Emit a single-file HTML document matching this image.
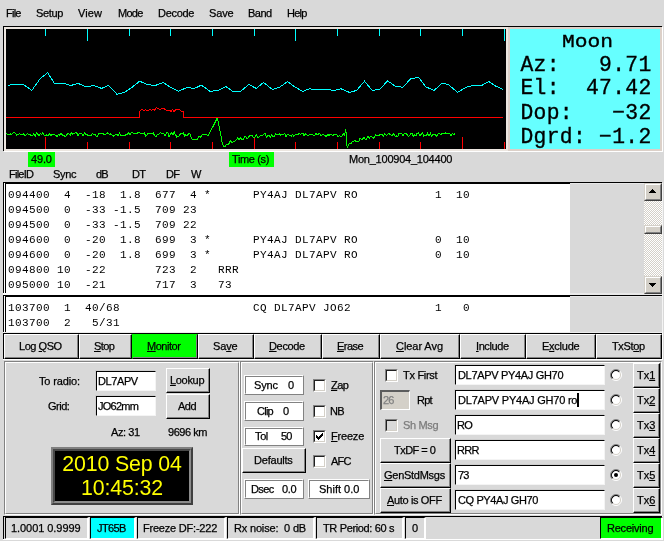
<!DOCTYPE html>
<html><head><meta charset="utf-8"><title>WSJT</title><style>
html,body{margin:0;padding:0;}
body{width:664px;height:541px;background:#d9d9d9;overflow:hidden;position:relative;font-family:"Liberation Sans",sans-serif;font-size:11px;color:#000;}
.a{position:absolute;box-sizing:border-box;}
.t{position:absolute;will-change:transform;-webkit-text-stroke:0.25px currentColor;white-space:pre;line-height:13px;height:13px;}
.m{position:absolute;will-change:transform;white-space:pre;font-family:"Liberation Mono",monospace;font-size:11px;letter-spacing:0.4px;line-height:15px;height:15px;}
.btn{position:absolute;box-sizing:border-box;background:#d9d9d9;border-top:1px solid #fff;border-left:1px solid #fff;border-right:1px solid #000;border-bottom:1px solid #000;}
.btn:after{content:"";position:absolute;left:0;top:0;right:0;bottom:0;border-right:1px solid #828282;border-bottom:1px solid #828282;}
.ent{position:absolute;box-sizing:border-box;background:#fff;border-top:1px solid #000;border-left:1px solid #000;border-right:1px solid #f4f4f4;border-bottom:1px solid #f4f4f4;box-shadow:-1px -1px 0 #cdcdcd;}
.rdg{position:absolute;box-sizing:border-box;background:#fff;border-top:1px solid #fff;border-left:1px solid #fff;border-right:1px solid #828282;border-bottom:1px solid #828282;}
.rdg:after{content:"";position:absolute;left:0;top:0;right:0;bottom:0;border-top:1px solid #828282;border-left:1px solid #828282;border-right:1px solid #fff;border-bottom:1px solid #fff;}
.grv{position:absolute;box-sizing:border-box;border-top:1px solid #828282;border-left:1px solid #828282;border-right:1px solid #fff;border-bottom:1px solid #fff;}
.grv:after{content:"";position:absolute;left:0;top:0;right:0;bottom:0;border-top:1px solid #fff;border-left:1px solid #fff;border-right:1px solid #828282;border-bottom:1px solid #828282;}
.sk{position:absolute;box-sizing:border-box;border-top:1px solid #000;border-left:1px solid #000;border-right:1px solid #fff;border-bottom:1px solid #fff;}
.chk{position:absolute;box-sizing:border-box;width:13px;height:13px;background:#fff;border-top:1px solid #828282;border-left:1px solid #828282;border-right:1px solid #fff;border-bottom:1px solid #fff;}
.chk:after{content:"";position:absolute;left:0;top:0;right:0;bottom:0;border-top:1px solid #202020;border-left:1px solid #202020;border-right:1px solid #d4d0c8;border-bottom:1px solid #d4d0c8;}
u{text-decoration:underline;}
</style></head><body>
<div class="t" style="left:5.62px;top:7px;letter-spacing:-0.750px;">File</div>
<div class="t" style="left:35.50px;top:7px;letter-spacing:-0.367px;">Setup</div>
<div class="t" style="left:78.25px;top:7px;letter-spacing:0.078px;">View</div>
<div class="t" style="left:117.50px;top:7px;letter-spacing:-0.750px;">Mode</div>
<div class="t" style="left:157.50px;top:7px;letter-spacing:-0.297px;">Decode</div>
<div class="t" style="left:208.50px;top:7px;letter-spacing:-0.161px;">Save</div>
<div class="t" style="left:247.75px;top:7px;letter-spacing:-0.495px;">Band</div>
<div class="t" style="left:286.62px;top:7px;letter-spacing:-0.750px;">Help</div>
<div class="a" style="left:3px;top:26px;width:659px;height:1px;background:#000;"></div>
<div class="a" style="left:3px;top:26px;width:1px;height:125px;background:#000;"></div>
<div class="a" style="left:4px;top:27px;width:504px;height:124px;background:#ece6e0;"></div>
<div class="a" style="left:508px;top:27px;width:154px;height:124px;background:#dcd0c8;"></div>
<div class="a" style="left:4px;top:151px;width:658px;height:1px;background:#fff;"></div>
<div class="a" style="left:6px;top:29px;width:500px;height:120px;background:#000;"></div>
<div class="a" style="left:510px;top:29px;width:150px;height:120px;background:#66ffff;"></div>
<div class="a" style="left:662px;top:27px;width:1px;height:125px;background:#fff;"></div>
<svg class="a" style="left:0;top:0" width="664" height="541" shape-rendering="crispEdges">
<rect x="45" y="29" width="1" height="7" fill="#00ffff"/>
<rect x="45" y="137" width="1" height="12" fill="#ff0000"/>
<rect x="87" y="29" width="1" height="12" fill="#00ffff"/>
<rect x="87" y="142" width="1" height="7" fill="#ff0000"/>
<rect x="129" y="29" width="1" height="7" fill="#00ffff"/>
<rect x="129" y="142" width="1" height="7" fill="#ff0000"/>
<rect x="170" y="29" width="1" height="7" fill="#00ffff"/>
<rect x="170" y="142" width="1" height="7" fill="#ff0000"/>
<rect x="212" y="29" width="1" height="7" fill="#00ffff"/>
<rect x="212" y="142" width="1" height="7" fill="#ff0000"/>
<rect x="254" y="29" width="1" height="7" fill="#00ffff"/>
<rect x="254" y="137" width="1" height="12" fill="#ff0000"/>
<rect x="295" y="29" width="1" height="12" fill="#00ffff"/>
<rect x="295" y="142" width="1" height="7" fill="#ff0000"/>
<rect x="337" y="29" width="1" height="7" fill="#00ffff"/>
<rect x="337" y="142" width="1" height="7" fill="#ff0000"/>
<rect x="379" y="29" width="1" height="7" fill="#00ffff"/>
<rect x="379" y="142" width="1" height="7" fill="#ff0000"/>
<rect x="420" y="29" width="1" height="7" fill="#00ffff"/>
<rect x="420" y="142" width="1" height="7" fill="#ff0000"/>
<rect x="462" y="29" width="1" height="7" fill="#00ffff"/>
<rect x="462" y="137" width="1" height="12" fill="#ff0000"/>
<rect x="504" y="29" width="1" height="12" fill="#00ffff"/>
<rect x="504" y="142" width="1" height="7" fill="#ff0000"/>
<polyline fill="none" stroke="#00ffff" stroke-width="1" points="8.2,85.5 12.7,84.5 23.5,84.5 31.8,90.4 40.2,78.6 47.6,72.7 54.5,83.5 64.7,83.5 70.6,85.5 78.4,83.5 86.3,87 93.7,85.5 101.6,88.4 108.4,85.5 117,94.3 124.5,92.4 131.8,87.5 139.6,81.2 147.5,84.5 155.3,85.5 163.1,82.5 171,87.5 178.4,91.4 186.7,87.5 194.5,88.4 201.4,85.1 210.2,91.4 218,90.4 225.9,86.5 232.7,91.4 240.6,91.4 248.8,84.5 256.3,88.4 263.5,82.5 272.4,89.4 279.2,87.5 287.6,81.6 294.9,87 302.7,91.4 309.6,88.8 314.5,89.4 329.2,89.8 334.1,90.4 341,88.8 349.4,92.4 356.7,90.4 364.5,81.2 372.4,90.5 380.3,88.9 387.6,80.8 396.1,86.7 402.9,87.1 410.8,78.7 418.7,77.4 425.5,86.7 434.1,90.5 441.8,83.3 448.1,84.4 457.6,92.3 466.2,87.1 472.9,85.5 480.8,86 488.8,81.5 495.5,86 502.8,89.4"/>
<polyline fill="none" stroke="#ff0000" stroke-width="1" points="6,117.5 139.5,117.5 140,111 141,110.077 142.5,109.662 144,110.862 145.5,109.474 147,110.586 148.5,110.178 150,109.439 151.5,110.518 153,109.39 154.5,110.341 156,107.968 157.5,108.018 159,108.819 160.5,109.784 162,108.097 163.5,108.336 165,109.306 166.5,110.075 168,110.685 169.5,110.252 171,111.643 172.5,109.412 174,111.36 175.5,109.995 177,109.646 178.5,109.583 180,110.04 181.5,111.259 183,111 183.5,117.5 503,117.5"/>
<polyline fill="none" stroke="#00ff00" stroke-width="1" points="6.5,133.3 7.8,134.8 9.1,135.0 10.4,134.0 11.7,134.7 13.0,132.8 14.3,132.8 15.6,133.4 16.9,135.2 18.2,134.2 19.5,133.8 20.8,134.8 22.1,134.3 23.4,133.7 24.7,135.6 26.0,135.3 27.3,133.5 28.6,134.8 29.9,134.6 31.2,135.9 32.5,135.4 33.8,133.7 35.1,136.3 36.4,133.0 37.7,134.2 39.0,135.5 40.3,133.2 41.6,134.5 42.9,132.7 44.2,135.1 45.5,135.5 46.8,134.8 48.1,135.9 49.4,133.8 50.7,135.2 52.0,134.9 53.3,134.8 54.6,134.3 55.9,135.8 57.2,136.2 58.5,134.4 59.8,135.1 61.1,132.8 62.4,135.3 63.7,135.1 65.0,136.4 66.3,135.7 67.6,133.7 68.9,134.1 70.2,135.1 71.5,132.7 72.8,134.4 74.1,133.2 75.4,133.0 76.7,132.8 78.0,135.5 79.3,133.1 80.6,133.5 81.9,134.1 83.2,135.9 84.5,132.9 85.8,134.3 87.1,134.7 88.4,136.0 89.7,135.7 91.0,135.9 92.3,133.7 93.6,134.2 94.9,134.0 96.2,136.0 97.5,136.2 98.8,133.2 100.1,133.3 101.4,133.5 102.7,133.5 104.0,134.4 105.3,134.8 106.6,133.6 107.9,132.6 109.2,134.2 110.5,134.0 111.8,134.8 113.1,136.2 114.4,135.2 115.7,134.6 117.0,134.9 118.3,135.2 119.6,132.8 120.9,136.0 122.2,135.6 123.5,135.9 124.8,135.6 126.1,134.1 127.4,134.1 128.7,133.0 130.0,135.0 131.3,132.8 132.6,132.9 133.9,133.4 135.2,133.2 136.5,133.9 137.8,132.8 139.1,132.6 140.4,133.2 141.7,133.0 143.0,134.0 144.3,132.7 145.6,135.9 146.9,134.9 148.2,133.2 149.5,133.6 150.8,133.9 152.1,134.0 153.4,133.1 154.7,135.8 156.0,136.4 157.3,134.4 158.6,134.4 159.9,132.9 161.2,133.0 162.5,133.9 163.8,133.6 165.1,136.2 166.4,132.7 167.7,132.0 169.0,136.8 170.3,134.6 171.6,132.7 172.9,134.7 174.2,132.0 175.5,134.6 176.8,137.0 178.1,136.4 179.4,135.5 180.7,133.3 182.0,133.8 183.3,132.8 184.6,135.9 185.9,134.7 187.2,136.0 188.5,133.6 189.8,133.1 191.1,137.2 192.4,139.4 193.7,140.0 195.0,139.9 196.3,139.7 197.6,139.0 198.9,136.0 200.2,137.3 201.5,136.1 202.8,134.2 204.1,133.9 205.4,134.9 206.7,134.5 208.0,135.6 209.3,133.4 210.6,130.6 211.9,128.5 213.2,126.1 214.5,123.7 215.8,120.9 217.1,118.4 218.4,122.4 219.7,129.3 221.0,136.2 222.3,143.4 223.6,146.7 224.9,146.7 226.2,144.4 227.5,144.2 228.8,144.0 230.1,140.6 231.4,142.1 232.7,142.5 234.0,141.4 235.3,140.8 236.6,139.3 237.9,137.8 239.2,139.7 240.5,137.7 241.8,139.1 243.1,139.5 244.4,137.0 245.7,136.8 247.0,138.7 248.3,137.7 249.6,135.4 250.9,135.0 252.2,135.0 253.5,137.7 254.8,137.2 256.1,134.6 257.4,137.1 258.7,137.6 260.0,136.3 261.3,135.0 262.6,135.7 263.9,134.1 265.2,133.6 266.5,137.1 267.8,135.9 269.1,135.4 270.4,136.9 271.7,134.9 273.0,136.6 274.3,136.4 275.6,134.0 276.9,134.1 278.2,134.2 279.5,134.0 280.8,135.3 282.1,134.1 283.4,134.7 284.7,133.5 286.0,136.5 287.3,134.4 288.6,134.8 289.9,135.2 291.2,136.4 292.5,134.6 293.8,136.5 295.1,134.9 296.4,135.0 297.7,134.9 299.0,133.0 300.3,134.6 301.6,133.6 302.9,133.0 304.2,136.0 305.5,133.6 306.8,134.7 308.1,135.7 309.4,135.0 310.7,134.2 312.0,134.9 313.3,135.0 314.6,135.9 315.9,133.3 317.2,135.0 318.5,133.9 319.8,134.0 321.1,135.8 322.4,134.8 323.7,135.0 325.0,135.8 326.3,136.4 327.6,134.6 328.9,135.2 330.2,134.8 331.5,134.9 332.8,135.5 334.1,134.6 335.4,134.9 336.7,134.7 338.0,136.5 339.3,135.6 340.6,136.2 341.9,136.5 343.2,133.9 344.5,135.0 345.8,129.3 347.1,147.6 348.4,144.8 349.7,143.6 351.0,143.9 352.3,141.5 353.6,141.4 354.9,140.0 356.2,141.6 357.5,141.4 358.8,141.3 360.1,138.0 361.4,139.7 362.7,139.1 364.0,136.7 365.3,139.2 366.6,139.2 367.9,136.1 369.2,138.7 370.5,136.3 371.8,136.5 373.1,138.2 374.4,137.4 375.7,134.7 377.0,135.6 378.3,135.8 379.6,135.0 380.9,134.4 382.2,134.8 383.5,136.2 384.8,133.5 386.1,135.4 387.4,134.9 388.7,133.3 390.0,134.4 391.3,135.5 392.6,135.0 393.9,133.3 395.2,136.8 396.5,136.0 397.8,136.7 399.1,133.3 400.4,133.9 401.7,133.0 403.0,135.8 404.3,133.9 405.6,133.3 406.9,134.4 408.2,136.3 409.5,135.9 410.8,133.8 412.1,133.4 413.4,136.3 414.7,134.9 416.0,135.4 417.3,133.1 418.6,133.0 419.9,135.4 421.2,134.4 422.5,133.0 423.8,136.3 425.1,135.1 426.4,135.8 427.7,133.0 429.0,136.0 430.3,133.0 431.6,136.0 432.9,134.4 434.2,134.0 435.5,134.8 436.8,136.2 438.1,133.7 439.4,133.2 440.7,134.7 442.0,133.6 443.3,133.1 444.6,133.3 445.9,132.9 447.2,133.5 448.5,133.9 449.8,133.9 451.1,135.6 452.4,133.8 453.7,134.6 455.0,133.4"/>
</svg>
<div class="a" style="left:561.5px;top:29.5px;font-family:'Liberation Mono',monospace;font-size:21.33px;line-height:24px;white-space:pre;-webkit-text-stroke:0.35px #000;font-size:19px;letter-spacing:0;transform:scaleX(1.12);transform-origin:0 0;">Moon</div>
<div class="a" style="left:520.5px;letter-spacing:0.3px;top:52.6px;font-family:'Liberation Mono',monospace;font-size:21.33px;line-height:24px;white-space:pre;-webkit-text-stroke:0.35px #000;">Az:   9.71</div>
<div class="a" style="left:520.5px;letter-spacing:0.3px;top:75.6px;font-family:'Liberation Mono',monospace;font-size:21.33px;line-height:24px;white-space:pre;-webkit-text-stroke:0.35px #000;">El:  47.42</div>
<div class="a" style="left:520.5px;letter-spacing:0.3px;top:100.6px;font-family:'Liberation Mono',monospace;font-size:21.33px;line-height:24px;white-space:pre;-webkit-text-stroke:0.35px #000;">Dop:   −32</div>
<div class="a" style="left:520.5px;letter-spacing:0.3px;top:124.6px;font-family:'Liberation Mono',monospace;font-size:21.33px;line-height:24px;white-space:pre;-webkit-text-stroke:0.35px #000;">Dgrd: −1.2</div>
<div class="a" style="left:28px;top:152px;width:27px;height:15px;background:#00ff00;"></div>
<div class="t" style="left:31.00px;top:153px;letter-spacing:-0.161px;">49.0</div>
<div class="a" style="left:229px;top:152px;width:45px;height:15px;background:#00ff00;"></div>
<div class="t" style="left:232.25px;top:153px;letter-spacing:-0.359px;">Time (s)</div>
<div class="t" style="left:348.75px;top:153px;letter-spacing:-0.228px;">Mon_100904_104400</div>
<div class="t" style="left:9.37px;top:168px;letter-spacing:-0.750px;">FileID</div>
<div class="t" style="left:52.80px;top:168px;letter-spacing:-0.300px;">Sync</div>
<div class="t" style="left:95.72px;top:168px;letter-spacing:-0.750px;">dB</div>
<div class="t" style="left:131.87px;top:168px;letter-spacing:-0.750px;">DT</div>
<div class="t" style="left:165.62px;top:168px;letter-spacing:-0.750px;">DF</div>
<div class="t" style="left:190.99px;top:168px;letter-spacing:0.000px;">W</div>
<div class="a" style="left:3px;top:182px;width:659px;height:1px;background:#000;"></div>
<div class="a" style="left:570px;top:183px;width:92px;height:1px;background:#e6e6e6;"></div>
<div class="a" style="left:3px;top:182px;width:1px;height:111px;background:#000;"></div>
<div class="a" style="left:4px;top:183px;width:1px;height:110px;background:#fff;"></div>
<div class="a" style="left:5px;top:183px;width:565px;height:1px;background:#000;"></div>
<div class="a" style="left:5px;top:183px;width:1px;height:110px;background:#000;"></div>
<div class="a" style="left:6px;top:184px;width:564px;height:109px;background:#fff;"></div>
<div class="a" style="left:3px;top:293px;width:659px;height:2px;background:#e9e9e9;"></div>
<div class="a" style="left:3px;top:293px;width:567px;height:2px;background:#fff;"></div>
<div class="a" style="left:3px;top:295px;width:659px;height:1px;background:#000;"></div>
<div class="a" style="left:570px;top:296px;width:92px;height:1px;background:#e6e6e6;"></div>
<div class="a" style="left:3px;top:295px;width:1px;height:37px;background:#000;"></div>
<div class="a" style="left:4px;top:296px;width:1px;height:36px;background:#fff;"></div>
<div class="a" style="left:5px;top:296px;width:565px;height:1px;background:#000;"></div>
<div class="a" style="left:5px;top:296px;width:1px;height:36px;background:#000;"></div>
<div class="a" style="left:6px;top:297px;width:564px;height:35px;background:#fff;"></div>
<div class="a" style="left:3px;top:332px;width:659px;height:1px;background:#ececec;"></div>
<div class="m" style="left:8px;top:188px;">094400  4  -18  1.8  677  4 *      PY4AJ DL7APV RO           1  10</div>
<div class="m" style="left:8px;top:203px;">094500  0  -33 -1.5  709 23</div>
<div class="m" style="left:8px;top:218px;">094500  0  -33 -1.5  709 22</div>
<div class="m" style="left:8px;top:233px;">094600  0  -20  1.8  699  3 *      PY4AJ DL7APV RO           0  10</div>
<div class="m" style="left:8px;top:248px;">094600  0  -20  1.8  699  3 *      PY4AJ DL7APV RO           0  10</div>
<div class="m" style="left:8px;top:263px;">094800 10  -22       723  2   RRR</div>
<div class="m" style="left:8px;top:278px;">095000 10  -21       717  3   73</div>
<div class="m" style="left:8px;top:301px;">103700  1  40/68                   CQ DL7APV JO62            1   0</div>
<div class="m" style="left:8px;top:316px;">103700  2   5/31</div>
<div class="a" style="left:644px;top:183px;width:18px;height:111px;background:#eae8e4;background-image:conic-gradient(#fff 25%,#d4d0c8 0 50%,#fff 0 75%,#d4d0c8 0);background-size:2px 2px;"></div>
<div class="a" style="left:644px;top:183px;width:18px;height:18px;background:#d4d0c8;border-top:1px solid #d4d0c8;border-left:1px solid #d4d0c8;border-right:1px solid #404040;border-bottom:1px solid #404040;"><div class="a" style="left:0;top:0;right:0;bottom:0;border-top:1px solid #fff;border-left:1px solid #fff;border-right:1px solid #808080;border-bottom:1px solid #808080;"></div></div>
<div class="a" style="left:652px;top:189px;width:1px;height:1px;background:#000;"></div>
<div class="a" style="left:651px;top:190px;width:3px;height:1px;background:#000;"></div>
<div class="a" style="left:650px;top:191px;width:5px;height:1px;background:#000;"></div>
<div class="a" style="left:649px;top:192px;width:7px;height:1px;background:#000;"></div>
<div class="a" style="left:644px;top:276px;width:18px;height:18px;background:#d4d0c8;border-top:1px solid #d4d0c8;border-left:1px solid #d4d0c8;border-right:1px solid #404040;border-bottom:1px solid #404040;"><div class="a" style="left:0;top:0;right:0;bottom:0;border-top:1px solid #fff;border-left:1px solid #fff;border-right:1px solid #808080;border-bottom:1px solid #808080;"></div></div>
<div class="a" style="left:649px;top:283px;width:7px;height:1px;background:#000;"></div>
<div class="a" style="left:650px;top:284px;width:5px;height:1px;background:#000;"></div>
<div class="a" style="left:651px;top:285px;width:3px;height:1px;background:#000;"></div>
<div class="a" style="left:652px;top:286px;width:1px;height:1px;background:#000;"></div>
<div class="a" style="left:644px;top:225px;width:18px;height:9px;background:#d4d0c8;border-top:1px solid #d4d0c8;border-left:1px solid #d4d0c8;border-right:1px solid #404040;border-bottom:1px solid #404040;"><div class="a" style="left:0;top:0;right:0;bottom:0;border-top:1px solid #fff;border-left:1px solid #fff;border-right:1px solid #808080;border-bottom:1px solid #808080;"></div></div>
<div class="a" style="left:662px;top:183px;width:1px;height:150px;background:#f4f4f4;"></div>
<div class="a" style="left:3px;top:333px;width:659px;height:1px;background:#000;"></div>
<div class="a" style="left:3px;top:333px;width:1px;height:26px;background:#000;"></div>
<div class="a" style="left:3px;top:359px;width:660px;height:1px;background:#fff;"></div>
<div class="a" style="left:662px;top:333px;width:1px;height:27px;background:#fff;"></div>
<div class="btn" style="left:4px;top:334px;width:75px;height:25px;"></div>
<div class="t" style="left:18.75px;top:340px;letter-spacing:-0.451px;">Log <u>Q</u>SO</div>
<div class="btn" style="left:79px;top:334px;width:53px;height:25px;"></div>
<div class="t" style="left:93.75px;top:340px;letter-spacing:-0.578px;"><u>S</u>top</div>
<div class="btn" style="left:132px;top:334px;width:66px;height:25px;background:#00ff00;border-top-color:#00ff00;border-left-color:#00ff00;"></div>
<div class="t" style="left:146.80px;top:340px;letter-spacing:-0.467px;"><u>M</u>onitor</div>
<div class="btn" style="left:198px;top:334px;width:56px;height:25px;"></div>
<div class="t" style="left:212.75px;top:340px;letter-spacing:-0.161px;">Sa<u>v</u>e</div>
<div class="btn" style="left:254px;top:334px;width:68px;height:25px;"></div>
<div class="t" style="left:269.00px;top:340px;letter-spacing:-0.347px;"><u>D</u>ecode</div>
<div class="btn" style="left:322px;top:334px;width:58px;height:25px;"></div>
<div class="t" style="left:337.00px;top:340px;letter-spacing:-0.500px;"><u>E</u>rase</div>
<div class="btn" style="left:380px;top:334px;width:80px;height:25px;"></div>
<div class="t" style="left:395.75px;top:340px;letter-spacing:-0.062px;"><u>C</u>lear Avg</div>
<div class="btn" style="left:460px;top:334px;width:66px;height:25px;"></div>
<div class="t" style="left:475.75px;top:340px;letter-spacing:-0.414px;"><u>I</u>nclude</div>
<div class="btn" style="left:526px;top:334px;width:70px;height:25px;"></div>
<div class="t" style="left:541.75px;top:340px;letter-spacing:-0.247px;">E<u>x</u>clude</div>
<div class="btn" style="left:596px;top:334px;width:66px;height:25px;"></div>
<div class="t" style="left:611.75px;top:340px;letter-spacing:-0.347px;">TxSt<u>o</u>p</div>
<div class="grv" style="left:4px;top:361px;width:236px;height:154px;"></div>
<div class="t" style="left:38.75px;top:375px;letter-spacing:-0.154px;">To radio:</div>
<div class="t" style="left:47.50px;top:400px;letter-spacing:-0.500px;">Grid:</div>
<div class="ent" style="left:96px;top:371px;width:60px;height:20px;"></div>
<div class="t" style="left:98.25px;top:375px;letter-spacing:-0.397px;">DL7APV</div>
<div class="ent" style="left:96px;top:396px;width:60px;height:20px;"></div>
<div class="t" style="left:98.25px;top:400px;letter-spacing:-0.750px;">JO62mm</div>
<div class="btn" style="left:166px;top:368px;width:44px;height:25px;"></div>
<div class="t" style="left:169.60px;top:374px;letter-spacing:-0.314px;"><u>L</u>ookup</div>
<div class="btn" style="left:166px;top:394px;width:44px;height:25px;"></div>
<div class="t" style="left:178.00px;top:400px;letter-spacing:-0.492px;">Add</div>
<div class="t" style="left:110.50px;top:426px;letter-spacing:-0.394px;">Az: 31</div>
<div class="t" style="left:167.80px;top:426px;letter-spacing:-0.464px;">9696 km</div>
<div class="a" style="left:51px;top:447px;width:142px;height:58px;background:#000;border:2px solid;border-color:#808080 #404040 #404040 #808080;"><div class="a" style="left:0;top:0;right:0;bottom:0;border:2px solid;border-color:#484848 #8c8c8c #8c8c8c #484848;"></div></div>
<div class="a" style="left:52px;top:451.5px;width:140px;text-align:center;color:#ffff00;font-size:21.33px;line-height:24.5px;white-space:pre;letter-spacing:-0.15px;">2010 Sep 04
10:45:32</div>
<div class="grv" style="left:240px;top:361px;width:134px;height:154px;"></div>
<div class="rdg" style="left:244px;top:375px;width:60px;height:20px;"></div>
<div class="t" style="left:253.50px;top:379px;letter-spacing:-0.167px;">Sync</div>
<div class="t" style="left:287.75px;top:379px;letter-spacing:0.000px;">0</div>
<div class="rdg" style="left:244px;top:401px;width:60px;height:20px;"></div>
<div class="t" style="left:257.49px;top:405px;letter-spacing:-0.750px;">Clip</div>
<div class="t" style="left:283.38px;top:405px;letter-spacing:0.000px;">0</div>
<div class="rdg" style="left:244px;top:427px;width:60px;height:19px;"></div>
<div class="t" style="left:255.25px;top:430px;letter-spacing:-0.375px;">Tol</div>
<div class="t" style="left:281.00px;top:430px;letter-spacing:-0.750px;">50</div>
<div class="btn" style="left:242px;top:448px;width:64px;height:25px;"></div>
<div class="t" style="left:253.50px;top:454px;letter-spacing:-0.212px;">Defaults</div>
<div class="rdg" style="left:244px;top:479px;width:60px;height:20px;"></div>
<div class="t" style="left:250.50px;top:483px;letter-spacing:-0.583px;">Dsec</div>
<div class="t" style="left:281.75px;top:483px;letter-spacing:-0.367px;">0.0</div>
<div class="rdg" style="left:308px;top:479px;width:62px;height:20px;"></div>
<div class="t" style="left:318.50px;top:483px;letter-spacing:0.006px;">Shift 0.0</div>
<div class="chk" style="left:313px;top:379px;"></div>
<div class="t" style="left:331.00px;top:379px;letter-spacing:-0.500px;"><u>Z</u>ap</div>
<div class="chk" style="left:313px;top:405px;"></div>
<div class="t" style="left:330.38px;top:405px;letter-spacing:-0.750px;">NB</div>
<div class="chk" style="left:313px;top:430px;"></div>
<svg class="a" style="left:313px;top:430px" width="13" height="13" shape-rendering="crispEdges"><path d="M3 5 L3 8 L5 10 L10 5 L10 2 L5 7 Z" fill="#000"/></svg>
<div class="t" style="left:331.00px;top:430px;letter-spacing:-0.200px;"><u>F</u>reeze</div>
<div class="chk" style="left:313px;top:455px;"></div>
<div class="t" style="left:330.75px;top:455px;letter-spacing:-0.750px;">AFC</div>
<div class="grv" style="left:374px;top:361px;width:288px;height:154px;"></div>
<div class="chk" style="left:385px;top:369px;"></div>
<div class="t" style="left:403.00px;top:369px;letter-spacing:-0.288px;">Tx First</div>
<div class="a" style="left:380px;top:390px;width:30px;height:20px;background:#d4d0c8;border-top:2px solid #5c5c5c;border-left:2px solid #5c5c5c;border-right:1px solid #fff;border-bottom:1px solid #fff;"></div>
<div class="t" style="left:382.98px;top:394px;letter-spacing:-0.750px;color:#808080;">26</div>
<div class="t" style="left:416.50px;top:394px;letter-spacing:-0.750px;">Rpt</div>
<div class="chk" style="left:385px;top:419px;background:#d9d9d9;"></div>
<div class="t" style="left:403.00px;top:419px;letter-spacing:-0.357px;color:#7c7c7c;">Sh Msg</div>
<div class="btn" style="left:380px;top:438px;width:71px;height:25px;"></div>
<div class="t" style="left:394.00px;top:444px;letter-spacing:-0.529px;">TxDF = 0</div>
<div class="btn" style="left:380px;top:463px;width:71px;height:25px;"></div>
<div class="t" style="left:383.70px;top:469px;letter-spacing:-0.274px;"><u>G</u>enStdMsgs</div>
<div class="btn" style="left:380px;top:488px;width:71px;height:25px;"></div>
<div class="t" style="left:386.90px;top:494px;letter-spacing:-0.357px;"><u>A</u>uto is OFF</div>
<div class="ent" style="left:455px;top:365px;width:150px;height:20px;"></div>
<div class="t" style="left:458.00px;top:369px;letter-spacing:-0.323px;">DL7APV PY4AJ GH70</div>
<svg class="a" style="left:610px;top:369px" width="12" height="12"><circle cx="6" cy="6" r="5" fill="#fff"/><path d="M2.1 9.9 A5.5 5.5 0 0 1 9.9 2.1" fill="none" stroke="#808080" stroke-width="1"/><path d="M9.9 2.1 A5.5 5.5 0 0 1 2.1 9.9" fill="none" stroke="#ffffff" stroke-width="1"/><path d="M2.8 9.2 A4.5 4.5 0 0 1 9.2 2.8" fill="none" stroke="#000" stroke-width="1.1"/><path d="M9.2 2.8 A4.5 4.5 0 0 1 2.8 9.2" fill="none" stroke="#d4d0c8" stroke-width="1"/></svg>
<div class="btn" style="left:633px;top:363px;width:27px;height:25px;"></div>
<div class="t" style="left:637.00px;top:369px;letter-spacing:-0.050px;">Tx<u>1</u></div>
<div class="ent" style="left:455px;top:390px;width:150px;height:20px;"></div>
<div class="t" style="left:458.00px;top:394px;letter-spacing:-0.212px;">DL7APV PY4AJ GH70 ro</div>
<svg class="a" style="left:610px;top:394px" width="12" height="12"><circle cx="6" cy="6" r="5" fill="#fff"/><path d="M2.1 9.9 A5.5 5.5 0 0 1 9.9 2.1" fill="none" stroke="#808080" stroke-width="1"/><path d="M9.9 2.1 A5.5 5.5 0 0 1 2.1 9.9" fill="none" stroke="#ffffff" stroke-width="1"/><path d="M2.8 9.2 A4.5 4.5 0 0 1 9.2 2.8" fill="none" stroke="#000" stroke-width="1.1"/><path d="M9.2 2.8 A4.5 4.5 0 0 1 2.8 9.2" fill="none" stroke="#d4d0c8" stroke-width="1"/></svg>
<div class="btn" style="left:633px;top:388px;width:27px;height:25px;"></div>
<div class="t" style="left:637.00px;top:394px;letter-spacing:-0.050px;">Tx<u>2</u></div>
<div class="ent" style="left:455px;top:415px;width:150px;height:20px;"></div>
<div class="t" style="left:456.88px;top:419px;letter-spacing:-0.750px;">RO</div>
<svg class="a" style="left:610px;top:419px" width="12" height="12"><circle cx="6" cy="6" r="5" fill="#fff"/><path d="M2.1 9.9 A5.5 5.5 0 0 1 9.9 2.1" fill="none" stroke="#808080" stroke-width="1"/><path d="M9.9 2.1 A5.5 5.5 0 0 1 2.1 9.9" fill="none" stroke="#ffffff" stroke-width="1"/><path d="M2.8 9.2 A4.5 4.5 0 0 1 9.2 2.8" fill="none" stroke="#000" stroke-width="1.1"/><path d="M9.2 2.8 A4.5 4.5 0 0 1 2.8 9.2" fill="none" stroke="#d4d0c8" stroke-width="1"/></svg>
<div class="btn" style="left:633px;top:413px;width:27px;height:25px;"></div>
<div class="t" style="left:637.00px;top:419px;letter-spacing:-0.050px;">Tx<u>3</u></div>
<div class="ent" style="left:455px;top:440px;width:150px;height:20px;"></div>
<div class="t" style="left:456.73px;top:444px;letter-spacing:-0.750px;">RRR</div>
<svg class="a" style="left:610px;top:444px" width="12" height="12"><circle cx="6" cy="6" r="5" fill="#fff"/><path d="M2.1 9.9 A5.5 5.5 0 0 1 9.9 2.1" fill="none" stroke="#808080" stroke-width="1"/><path d="M9.9 2.1 A5.5 5.5 0 0 1 2.1 9.9" fill="none" stroke="#ffffff" stroke-width="1"/><path d="M2.8 9.2 A4.5 4.5 0 0 1 9.2 2.8" fill="none" stroke="#000" stroke-width="1.1"/><path d="M9.2 2.8 A4.5 4.5 0 0 1 2.8 9.2" fill="none" stroke="#d4d0c8" stroke-width="1"/></svg>
<div class="btn" style="left:633px;top:438px;width:27px;height:25px;"></div>
<div class="t" style="left:637.00px;top:444px;letter-spacing:-0.050px;">Tx<u>4</u></div>
<div class="ent" style="left:455px;top:465px;width:150px;height:20px;"></div>
<div class="t" style="left:457.77px;top:469px;letter-spacing:-0.750px;">73</div>
<svg class="a" style="left:610px;top:469px" width="12" height="12"><circle cx="6" cy="6" r="5" fill="#fff"/><path d="M2.1 9.9 A5.5 5.5 0 0 1 9.9 2.1" fill="none" stroke="#808080" stroke-width="1"/><path d="M9.9 2.1 A5.5 5.5 0 0 1 2.1 9.9" fill="none" stroke="#ffffff" stroke-width="1"/><path d="M2.8 9.2 A4.5 4.5 0 0 1 9.2 2.8" fill="none" stroke="#000" stroke-width="1.1"/><path d="M9.2 2.8 A4.5 4.5 0 0 1 2.8 9.2" fill="none" stroke="#d4d0c8" stroke-width="1"/><circle cx="6" cy="6" r="2" fill="#000"/></svg>
<div class="btn" style="left:633px;top:463px;width:27px;height:25px;"></div>
<div class="t" style="left:637.00px;top:469px;letter-spacing:-0.050px;">Tx<u>5</u></div>
<div class="ent" style="left:455px;top:490px;width:150px;height:20px;"></div>
<div class="t" style="left:458.00px;top:494px;letter-spacing:-0.388px;">CQ PY4AJ GH70</div>
<svg class="a" style="left:610px;top:494px" width="12" height="12"><circle cx="6" cy="6" r="5" fill="#fff"/><path d="M2.1 9.9 A5.5 5.5 0 0 1 9.9 2.1" fill="none" stroke="#808080" stroke-width="1"/><path d="M9.9 2.1 A5.5 5.5 0 0 1 2.1 9.9" fill="none" stroke="#ffffff" stroke-width="1"/><path d="M2.8 9.2 A4.5 4.5 0 0 1 9.2 2.8" fill="none" stroke="#000" stroke-width="1.1"/><path d="M9.2 2.8 A4.5 4.5 0 0 1 2.8 9.2" fill="none" stroke="#d4d0c8" stroke-width="1"/></svg>
<div class="btn" style="left:633px;top:488px;width:27px;height:25px;"></div>
<div class="t" style="left:637.00px;top:494px;letter-spacing:-0.050px;">Tx<u>6</u></div>
<div class="a" style="left:577px;top:393px;width:2px;height:14px;background:#000;"></div>
<div class="a" style="left:3px;top:516px;width:659px;height:1px;background:#000;"></div>
<div class="a" style="left:3px;top:516px;width:1px;height:23px;background:#000;"></div>
<div class="a" style="left:3px;top:539px;width:660px;height:1px;background:#fff;"></div>
<div class="a" style="left:662px;top:516px;width:1px;height:24px;background:#fff;"></div>
<div class="sk" style="left:5px;top:517px;width:84px;height:22px;border-right:2px solid #fff;"></div>
<div class="t" style="left:11.25px;top:522px;letter-spacing:-0.056px;">1.0001 0.9999</div>
<div class="sk" style="left:90px;top:517px;width:46px;height:22px;border-right:2px solid #fff;background:#00ffff;"></div>
<div class="t" style="left:96.75px;top:522px;letter-spacing:-0.621px;">JT65B</div>
<div class="sk" style="left:137px;top:517px;width:89px;height:22px;border-right:2px solid #fff;"></div>
<div class="t" style="left:143.00px;top:522px;letter-spacing:-0.209px;">Freeze DF:-222</div>
<div class="sk" style="left:227px;top:517px;width:88px;height:22px;border-right:2px solid #fff;"></div>
<div class="t" style="left:233.50px;top:522px;letter-spacing:-0.174px;">Rx noise:  0 dB</div>
<div class="sk" style="left:316px;top:517px;width:88px;height:22px;border-right:2px solid #fff;"></div>
<div class="t" style="left:323.00px;top:522px;letter-spacing:-0.354px;">TR Period: 60 s</div>
<div class="sk" style="left:405px;top:517px;width:21px;height:22px;border-right:2px solid #fff;"></div>
<div class="t" style="left:411.50px;top:522px;letter-spacing:0.000px;">0</div>
<div class="sk" style="left:600px;top:517px;width:63px;height:22px;border-right:2px solid #fff;background:#00ff00;"></div>
<div class="t" style="left:606.75px;top:522px;letter-spacing:-0.219px;">Receiving</div>
</body></html>
